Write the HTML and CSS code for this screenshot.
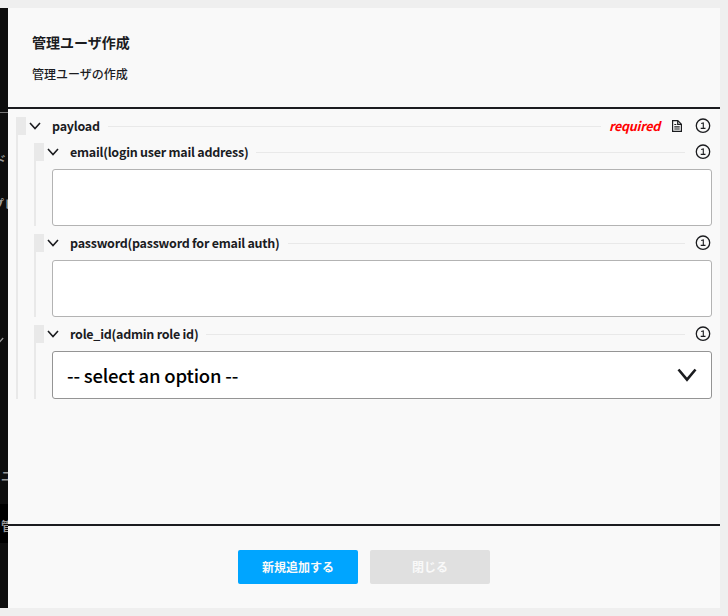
FILE: index.html
```
<!DOCTYPE html>
<html lang="ja">
<head>
<meta charset="utf-8">
<title>管理ユーザ作成</title>
<link rel="stylesheet" href="styles.css">
</head>
<body>
<svg class="defs" width="0" height="0">
  <symbol id="chevron" viewBox="0 0 12 8"><path d="M1 1l5 5.500L11 1" fill="none" stroke="currentColor" stroke-width="1.600"/></symbol>
  <symbol id="info" viewBox="0 0 16 16"><circle cx="8" cy="7.700" r="6.700" fill="none" stroke="currentColor" stroke-width="1.300"/><path d="M6.200 5.600L8.300 4.900v5.300M5.700 10.400h4.800" fill="none" stroke="currentColor" stroke-width="1.100"/></symbol>
</svg>
<div class="page">
  <nav class="sidebar">
    <div class="brand"></div>
    <div class="item end"><span>ド</span></div>
    <div class="item end pre"><span>プレ</span></div>
    <div class="group"><svg width="10" height="7" viewBox="0 0 12 8"><use href="#chevron"/></svg></div>
    <div class="item user"><span>ユ</span></div>
    <div class="item active"><span>管</span></div>
  </nav>
  <main class="modal">
    <header class="header">
      <h1>管理ユーザ作成</h1>
      <p>管理ユーザの作成</p>
    </header>
    <div class="content">
      <section class="field">
        <div class="label">
          <svg class="arrow"><use href="#chevron"/></svg><span>payload</span><i class="rule"></i>
          <em>required</em>
          <svg class="doc" viewBox="0 0 10 12"><path d="M.6.6h5.200l3.600 3.600v7.200H.6zM5.700.8v3.500h3.500M2.300 4.500h2M2.300 6.800h5.400M2.300 9h5.400" fill="none" stroke="currentColor" stroke-width="1.200"/></svg>
          <svg class="info"><use href="#info"/></svg>
        </div>
        <section class="field">
          <div class="label"><svg class="arrow"><use href="#chevron"/></svg><span>email(login user mail address)</span><i class="rule"></i><svg class="info"><use href="#info"/></svg></div>
          <div class="input"></div>
        </section>
        <section class="field">
          <div class="label"><svg class="arrow"><use href="#chevron"/></svg><span>password(password for email auth)</span><i class="rule"></i><svg class="info"><use href="#info"/></svg></div>
          <div class="input"></div>
        </section>
        <section class="field">
          <div class="label"><svg class="arrow"><use href="#chevron"/></svg><span>role_id(admin role id)</span><i class="rule"></i><svg class="info"><use href="#info"/></svg></div>
          <div class="select"><span>-- select an option --</span><svg width="20" height="15" viewBox="0 0 20 15"><path d="M1.500 1.500L10 11.700l8.500-10.200" fill="none" stroke="currentColor" stroke-width="2.600"/></svg></div>
        </section>
      </section>
    </div>
    <footer class="footer">
      <button class="primary">新規追加する</button>
      <button class="secondary">閉じる</button>
    </footer>
  </main>
</div>
</body>
</html>
```
FILE: styles.css
```
* { box-sizing: border-box; }
body {
  margin: 0;
  background: #efefef;
  color: #1b1c1f;
  font-family: "Noto Sans CJK JP", "Noto Sans", sans-serif;
}
.defs { display: block; }
.page {
  display: flex;
  height: 616px;
  padding: 8px 8px 8px 0;
}
.sidebar {
  width: 8px;
  overflow: hidden;
  background: #0e0e0e;
  color: #999;
  font-size: 12px;
  font-weight: 700;
  white-space: nowrap;
}
.brand { height: 105px; border-bottom: 1px solid #777; }
.item {
  display: flex;
  align-items: center;
  height: 44px;
}
.item.end { justify-content: flex-end; margin-top: 24px; }
.item.end span { margin-right: 2px; }
.item.pre { margin-top: 0; }
.item.pre span { margin-right: -8px; }
.group {
  display: flex;
  justify-content: flex-end;
  padding-right: 4px;
  margin-top: 112px;
  height: 8px;
}
.group svg { flex: none; }
.item.user { margin-top: 108px; }
.item.user span { margin-left: 1px; }
.item.active {
  height: 39px;
  margin-top: 7px;
  padding: 4px 0 0 1px;
  background: #000;
}
.modal {
  flex: 1;
  min-width: 0;
  display: flex;
  flex-direction: column;
  background: #f9f9f9;
}
.header {
  height: 101px;
  padding: 24px 24px 0;
  border-bottom: 2px solid #1b1c1f;
}
.header h1 { margin: 0; font-size: 14px; line-height: 20px; font-weight: 700; }
.header p { margin: 13px 0 0; font-size: 12px; line-height: 18px; font-weight: 500; }
.content { flex: 1; padding: 8px; }
.field { border-left: 2px solid #e9e9e9; padding-left: 16px; }
.field .field { margin-top: 8px; }
.label {
  display: flex;
  align-items: center;
  height: 18px;
  margin-left: -16px;
  border-left: 8px solid #e9e9e9;
  padding-left: 3px;
  font-size: 12.500px;
  letter-spacing: -0.250px;
  line-height: 18px;
  font-weight: 700;
  white-space: nowrap;
}
.arrow { width: 12px; height: 8px; margin-right: 11px; }
.rule { flex: 1; height: 1px; margin: 0 8px; background: #e9e9e9; }
.label em { color: #f00; margin-right: 12px; }
.doc { width: 10px; height: 12px; margin-right: 13px; }
.info { width: 16px; height: 16px; margin: 0 1px 0 0; }
.rule + .info { margin-left: 2px; }
.input {
  height: 57px;
  margin-top: 8px;
  border: 1px solid #b3b3b3;
  border-radius: 3px;
  background: #fff;
}
.select {
  display: flex;
  align-items: center;
  justify-content: space-between;
  height: 48px;
  margin-top: 8px;
  padding: 0 14px;
  border: 1px solid #949494;
  border-radius: 3px;
  background: #fff;
  font-size: 18.500px;
  letter-spacing: -0.200px;
  font-weight: 500;
}
.select span { color: #000; }
.footer {
  display: flex;
  justify-content: center;
  gap: 12px;
  height: 84px;
  padding-top: 24px;
  border-top: 2px solid #1b1c1f;
}
.footer button {
  width: 120px;
  height: 34px;
  padding: 0;
  border: 0;
  border-radius: 2px;
  color: #f9f9f9;
  font: 700 12px/18px "Noto Sans CJK JP", sans-serif;
}
.footer .primary { background: #00a5ff; }
.footer .secondary { background: #e0e0e0; }
```
